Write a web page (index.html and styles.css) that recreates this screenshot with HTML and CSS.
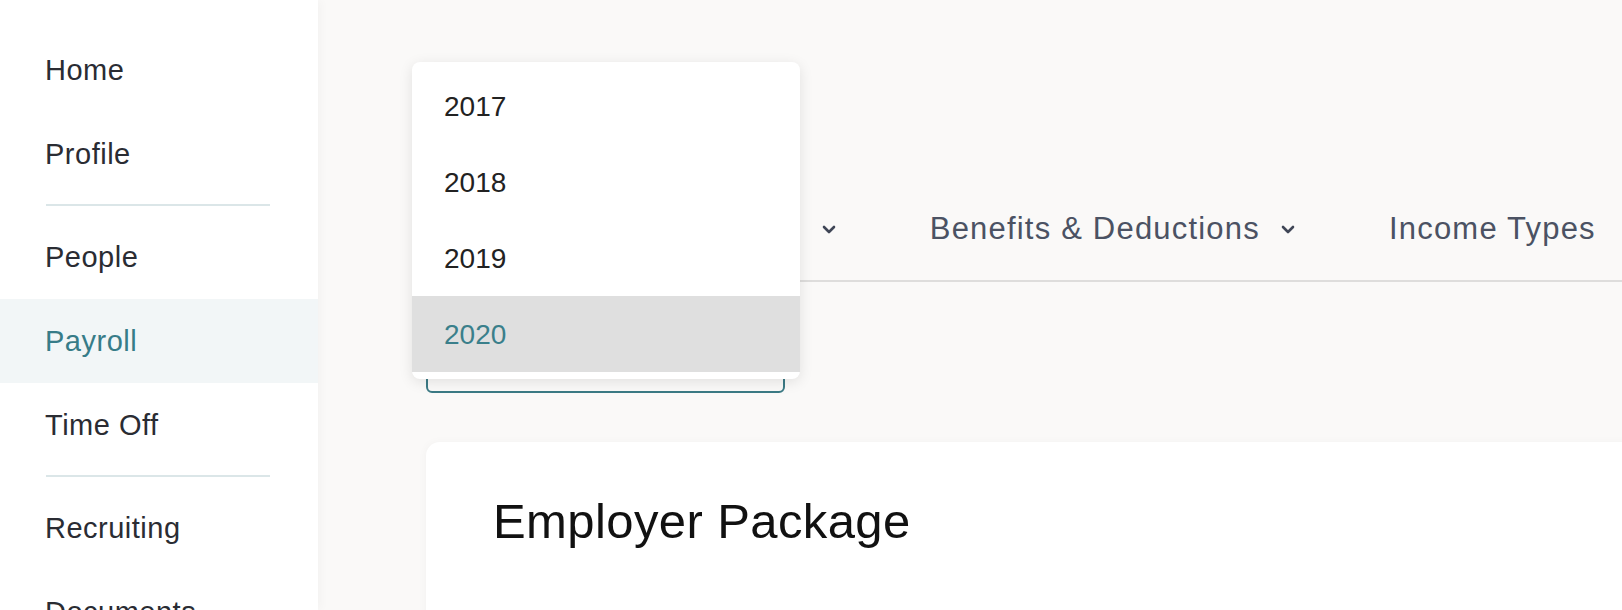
FILE: index.html
```html
<!DOCTYPE html>
<html lang="en">
  <head>
    <meta charset="UTF-8" />
    <meta name="viewport" content="width=device-width, initial-scale=1.0" />
    <title>Payroll Settings</title>
    <link rel="stylesheet" href="styles.css">
  </head>
  <body>
    <div class="layout">
      <aside class="sidebar">
        <a class="side-link" href="#">Home</a>
        <a class="side-link" href="#">Profile</a>
        <div class="side-divider"></div>
        <a class="side-link" href="#">People</a>
        <a class="side-link active" href="#">Payroll</a>
        <a class="side-link" href="#">Time Off</a>
        <div class="side-divider"></div>
        <a class="side-link" href="#">Recruiting</a>
        <a class="side-link" href="#">Documents</a>
      </aside>

      <main class="content">
        <nav class="tabs">
          <span class="tab">Overview</span>
          <span class="tab">Earnings
            <svg class="chevron" viewBox="0 0 14 9"><path d="M2 2l5 5 5-5" /></svg>
          </span>
          <span class="tab">Benefits &amp; Deductions
            <svg class="chevron" viewBox="0 0 14 9"><path d="M2 2l5 5 5-5" /></svg>
          </span>
          <span class="tab">Income Types</span>
        </nav>

        <div class="year-select">
          <div class="select-box">2020</div>
          <!-- open menu of the year select -->
          <ul class="year-menu">
            <li class="year">2017</li>
            <li class="year">2018</li>
            <li class="year">2019</li>
            <li class="year selected">2020</li>
          </ul>
        </div>

        <section class="card">
          <h2 class="card-title">Employer Package</h2>
        </section>
      </main>
    </div>
  </body>
</html>
```

FILE: styles.css
```css
body {
  margin: 0;
  font-family: "Liberation Sans", Arial, sans-serif;
  background-color: #faf9f8;
  height: 100vh;
  overflow: hidden;
}

.layout {
  display: flex;
  height: 100vh;
}

/* Left menu */
.sidebar {
  width: 318px;
  flex: none;
  padding-top: 28px;
  background-color: #ffffff;
  box-shadow: 2px 0 10px rgba(0, 0, 0, 0.035);
  position: relative;
  z-index: 1;
}

.side-link {
  display: block;
  height: 84px;
  line-height: 84px;
  padding-left: 45px;
  font-size: 29px;
  letter-spacing: 0.5px;
  color: #2a2c33;
  text-decoration: none;
}

.side-link.active {
  color: #377c88;
  background-color: #f2f6f7;
}

.side-divider {
  width: 224px;
  height: 2px;
  margin: 8px 0 9px 46px;
  background-color: #dbe6e8;
}

/* Main area */
.content {
  flex: 1;
  min-width: 0;
  padding: 211px 0 0 108px;
}

.tabs {
  display: flex;
  gap: 94px;
  margin-left: 10px;
  padding-bottom: 33px;
  border-bottom: 2px solid #dedddc;
}

.tab {
  display: flex;
  align-items: center;
  flex: none;
  line-height: 36px;
  font-size: 31px;
  letter-spacing: 1.2px;
  color: #4b5263;
  white-space: nowrap;
}

.chevron {
  width: 14px;
  height: 9px;
  margin-left: 21px;
  fill: none;
  stroke: #3f4656;
  stroke-width: 2.6;
  stroke-linecap: round;
  stroke-linejoin: round;
}

.year-select {
  position: relative;
  width: 359px;
  margin-top: 55px;
}

.select-box {
  box-sizing: border-box;
  height: 56px;
  padding-left: 18px;
  line-height: 52px;
  font-size: 28px;
  color: #222;
  border: 2px solid #3b7a85;
  border-radius: 6px;
}

.year-menu {
  position: absolute;
  left: -14px;
  top: -275px;
  width: 388px;
  margin: 0;
  padding: 6px 0 7px;
  list-style: none;
  background-color: #ffffff;
  border-radius: 8px;
  box-shadow: 0 3px 14px rgba(0, 0, 0, 0.1);
  z-index: 5;
}

.year {
  height: 76px;
  line-height: 78px;
  padding-left: 32px;
  font-size: 28px;
  color: #222222;
}

.year.selected {
  color: #3a7f8b;
  background-color: #dfdfdf;
}

.card {
  height: 300px;
  margin: 49px -60px 0 0;
  padding: 51px 67px;
  background-color: #ffffff;
  border-radius: 14px 0 0 0;
  box-shadow: -1px 0 8px rgba(0, 0, 0, 0.03);
}

.card-title {
  margin: 0;
  font-size: 49px;
  font-weight: 400;
  line-height: 56px;
  letter-spacing: 0.4px;
  color: #111111;
}
```
